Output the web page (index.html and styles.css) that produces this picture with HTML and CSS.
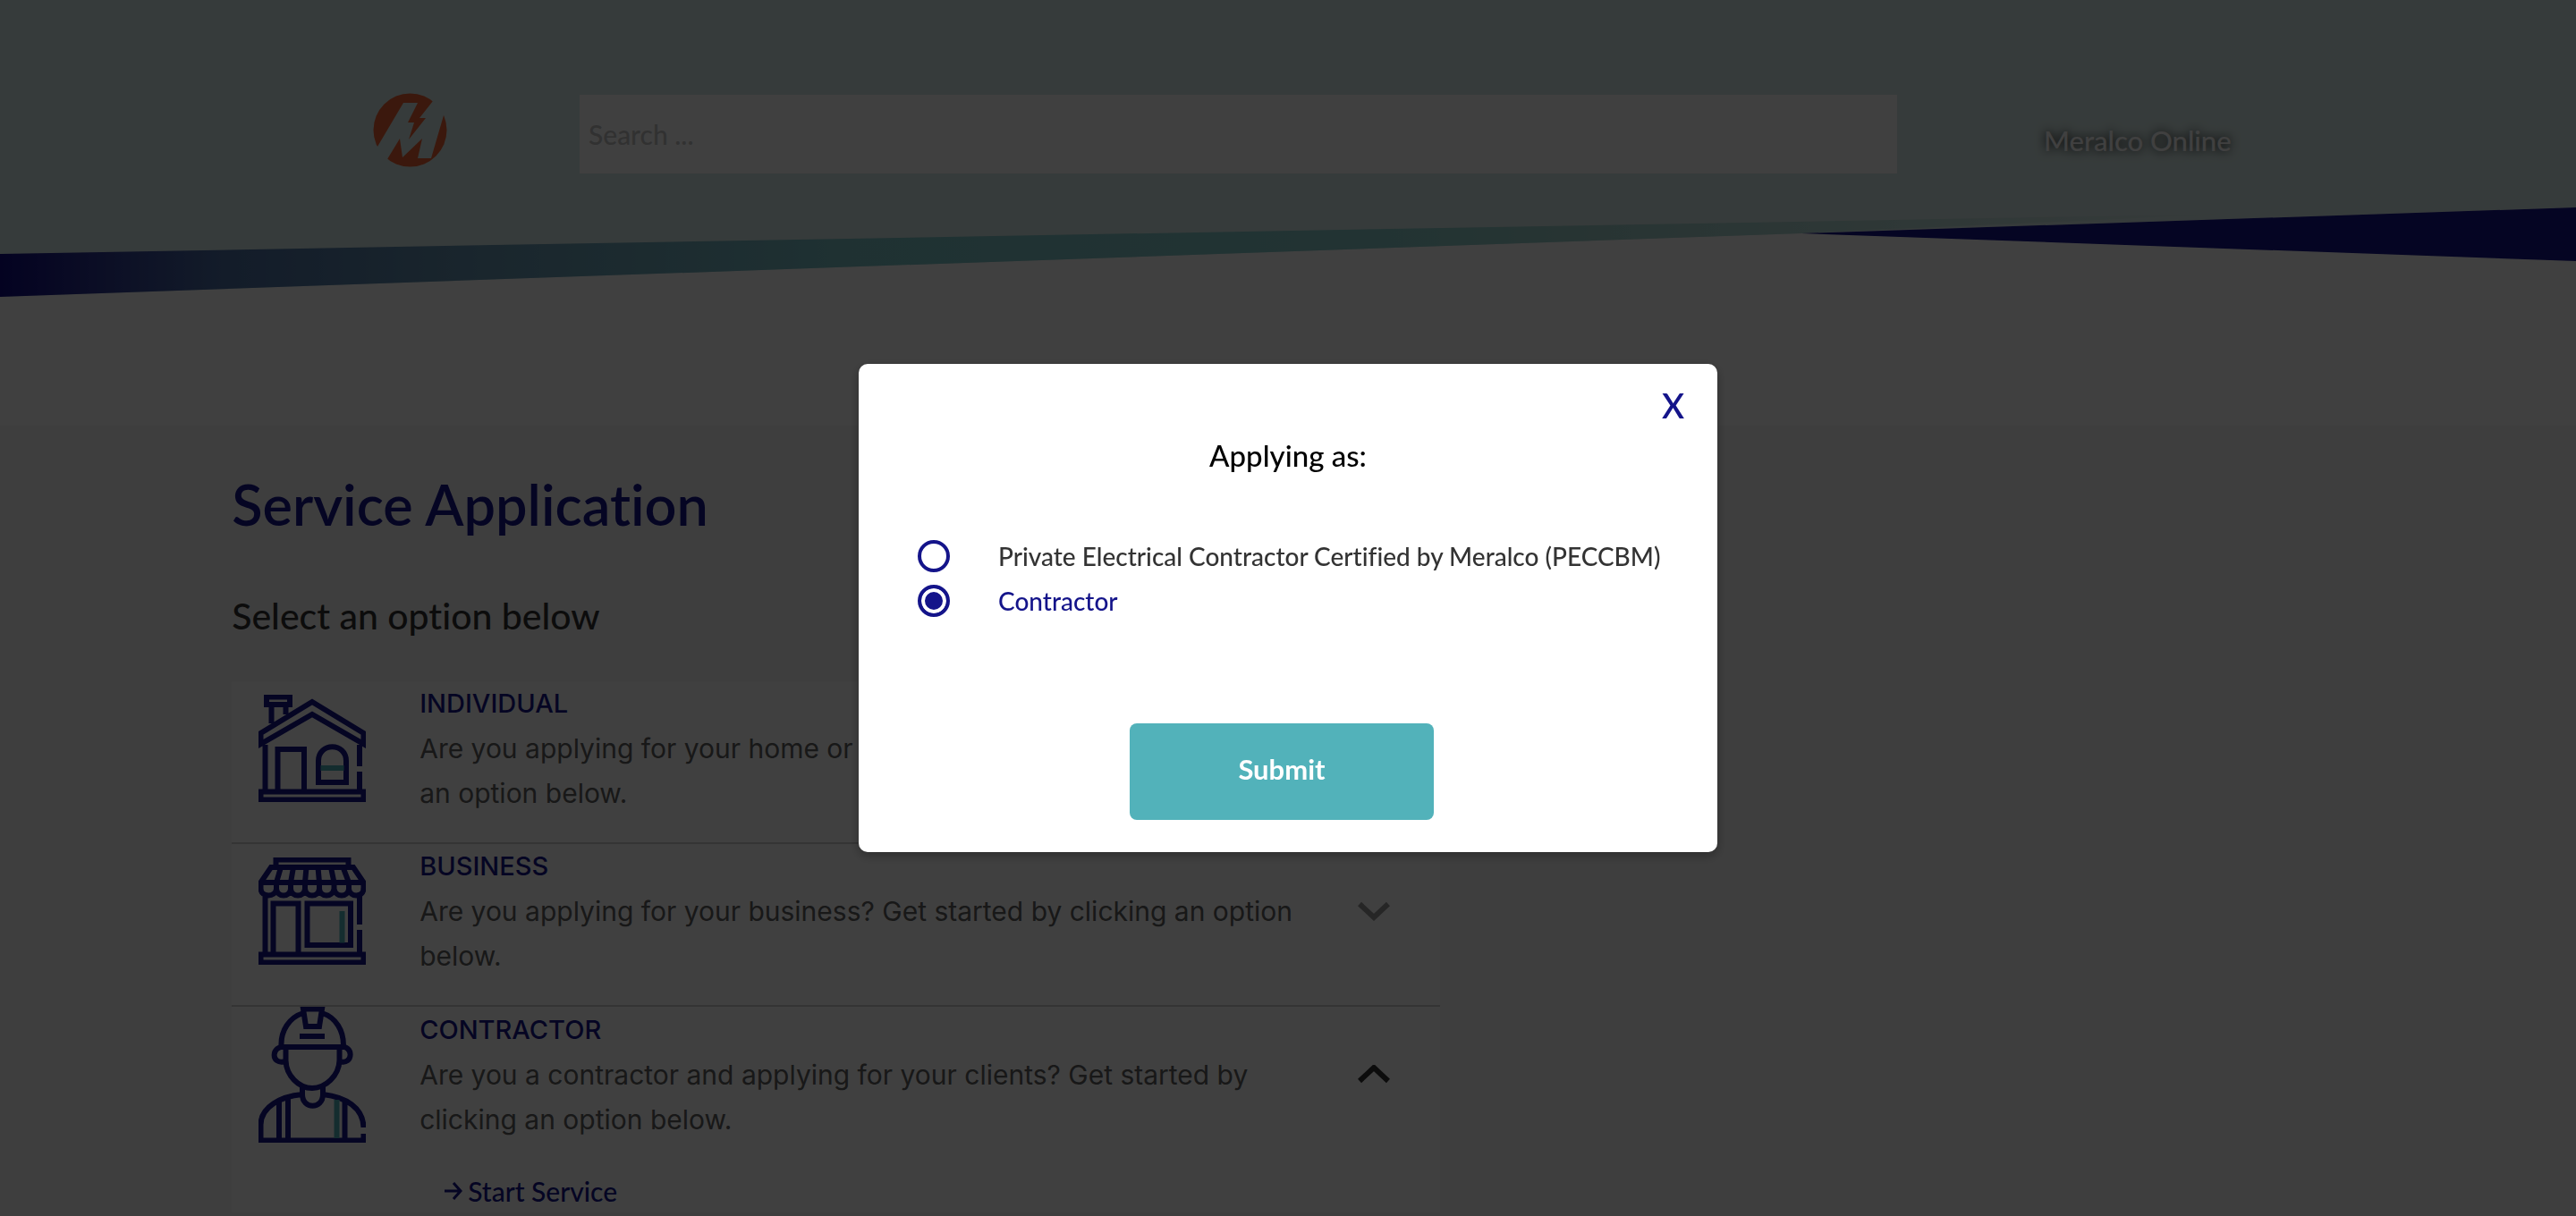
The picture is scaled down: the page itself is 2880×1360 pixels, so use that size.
FILE: index.html
```html
<!DOCTYPE html>
<html lang="en">
<head>
<meta charset="utf-8">
<meta name="viewport" content="width=device-width, initial-scale=1">
<title>Service Application | Meralco Online</title>
<link rel="stylesheet" href="styles.css">
</head>
<body>
<header class="site-header">
  <svg class="wave" viewBox="0 0 2880 476" preserveAspectRatio="none" aria-hidden="true">
    <defs>
      <linearGradient id="ribbon" x1="0" y1="0" x2="1" y2="0">
        <stop offset="0" stop-color="#100a84"/>
        <stop offset="0.04" stop-color="#2c3492"/>
        <stop offset="0.1" stop-color="#4c70a4"/>
        <stop offset="0.22" stop-color="#6898b4"/>
        <stop offset="0.38" stop-color="#7cc4c8"/>
        <stop offset="0.62" stop-color="#88cccc"/>
        <stop offset="0.72" stop-color="#a0d0cc"/>
        <stop offset="0.84" stop-color="#b8dcd8"/>
        <stop offset="1" stop-color="#d8ebe9"/>
      </linearGradient>
    </defs>
    <path fill="#d8ebe9" d="M0 0H2880V232L2014 261L0 332Z"/>
    <path fill="url(#ribbon)" d="M0 284L2500 239L2014 261L0 332Z"/>
    <path fill="#14148a" d="M2014 261L2880 232V292Z"/>
  </svg>
  <div class="header-row">
    <a class="brand" href="#" aria-label="Meralco">
      <svg class="logo" viewBox="0 0 83 83" aria-hidden="true">
        <mask id="bolt">
          <rect width="83" height="83" fill="#fff"/>
          <path fill="#000" d="M34 11H50L39 33H46L40 52L59 28H52L67 9L75 0H86L79 25L65 73H50L55 51L33 72L30 51L16 74L8 86L0 70L5 60Z"/>
        </mask>
        <circle cx="41.500" cy="41.500" r="41" fill="#ea6234" mask="url(#bolt)"/>
      </svg>
    </a>
    <input class="search" type="search" placeholder="Search ..." aria-label="Search">
    <a class="online-link" href="#">Meralco Online</a>
  </div>
</header>

<main class="content">
  <h1 class="page-title">Service Application</h1>
  <h2 class="page-subtitle">Select an option below</h2>
  <div class="options">
    <section class="option">
      <button class="option-head" type="button" aria-expanded="false">
        <svg class="option-icon" viewBox="0 0 120 120" aria-hidden="true">
          <path d="M9 2.500H35V11H9ZM14.500 12V32M30.500 12V22M60 8L117.500 43V55L60 22L2.500 55V43ZM7.500 56V107M113 56V80M113 86V107M21.500 107V61H51V107M67 98V74C67 53 98 53 98 74V98ZM2.500 108.500H117.500V117.500H2.500Z"/>
          <path class="accent" d="M69.500 82H95.500"/>
        </svg>
        <span class="option-text"><span class="option-name">INDIVIDUAL</span>Are you applying for your home or residence? Get started by clicking an option below.</span>
        <svg class="chevron" viewBox="0 0 36 22" aria-hidden="true"><path d="M2 3L18 18L34 3"/></svg>
      </button>
    </section>
    <section class="option">
      <button class="option-head" type="button" aria-expanded="false">
        <svg class="option-icon" viewBox="0 0 120 120" aria-hidden="true">
          <path d="M19.500 11V2.500H100.500V11M14 11H106L117.500 28H2.500ZM25 11L20 28M39 11L36 28M53.500 11L52 28M66.500 11L68 28M81 11L84.500 28M94.500 11L101 28M2.500 28V35C3 45 19 45 20 35V28M20 35C21 45 35 45 36 35V28M36 35C37 45 51 45 52 35V28M52 35C53 45 67 45 68 35V28M68 35C69 45 83 45 84.500 35V28M84.500 35C86 45 100 45 101 35V28M101 35C102 45 117 45 117.500 35V28M7.500 43V107M113 43V75M113 81V107M16.500 107V51.500H44.500V107M54.500 51.500H103V98H54.500ZM2.500 108.500H117.500V117.500H2.500Z"/>
          <path class="accent" d="M93.500 60V95.500"/>
        </svg>
        <span class="option-text"><span class="option-name">BUSINESS</span>Are you applying for your business? Get started by clicking an option below.</span>
        <svg class="chevron" viewBox="0 0 36 22" aria-hidden="true"><path d="M2 3L18 18L34 3"/></svg>
      </button>
    </section>
    <section class="option option-open">
      <button class="option-head" type="button" aria-expanded="true">
        <svg class="option-icon option-icon-tall" viewBox="0 0 120 152" aria-hidden="true">
          <path d="M50 2.500H71L68 22H53ZM25.500 43C25 27 34 12 50 7M95 43C95 27 87 12 71 7M25 45H95M30 45C14 42 13 66 30 61M91 45C107 42 106 66 91 61M30.500 45V60C31 77 45 91 60 91C75 91 90 77 90.500 60V45M49 89V98C49 115 72 115 72 98V89M49 98C25 100 2.500 112 2.500 132V149.500H117.500V142M72 98C98 101 117 113 117.500 135M23 105V149M33 102V149M96.500 104V149"/>
          <path d="M46 33H74"/>
          <path class="accent" d="M87.500 104V147"/>
        </svg>
        <span class="option-text"><span class="option-name">CONTRACTOR</span>Are you a contractor and applying for your clients? Get started by clicking an option below.</span>
        <svg class="chevron" viewBox="0 0 36 22" aria-hidden="true"><path d="M2 18L18 3L34 18"/></svg>
      </button>
      <div class="option-body">
        <a class="start-link" href="#">
          <svg class="arrow" viewBox="0 0 20 20" aria-hidden="true"><path d="M0 10H18M10 1L18 10L10 19"/></svg>
          Start Service
        </a>
      </div>
    </section>
  </div>
</main>

<div class="overlay">
  <form class="modal" role="dialog" aria-modal="true" aria-labelledby="modal-title">
    <button class="modal-close" type="button" aria-label="Close">X</button>
    <h2 class="modal-title" id="modal-title">Applying as:</h2>
    <div class="choices">
      <label class="choice"><input class="radio" type="radio" name="applicant" value="peccbm"><span class="choice-label">Private Electrical Contractor Certified by Meralco (PECCBM)</span></label>
      <label class="choice"><input class="radio" type="radio" name="applicant" value="contractor" checked><span class="choice-label">Contractor</span></label>
    </div>
    <div class="modal-actions"><button class="submit" type="submit">Submit</button></div>
  </form>
</div>
</body>
</html>
```
FILE: styles.css
```css
:root {
  --navy: #14148a;
  --teal: #52b2ba;
}

* { box-sizing: border-box; }

body {
  margin: 0;
  background: #f7f7f7;
  color: #333;
  font-family: Lato, "Open Sans", sans-serif;
  font-weight: 500;
  font-variant-ligatures: none;
}

button, input { font: inherit; }
a { text-decoration: none; }
h1, h2 { margin: 0; font-weight: 600; }

/* Header */
.site-header {
  position: relative;
  height: 476px;
  padding-top: 104px;
  background: #fff;
}
.wave {
  position: absolute;
  inset: 0;
  width: 100%;
  height: 100%;
}
.header-row {
  position: relative;
  display: grid;
  grid-template-columns: 22.5% 51.15% 1fr;
  align-items: center;
}
.brand { padding: 0 0 8px 64.4%; }
.logo { display: block; width: 83px; height: 83px; }
.search {
  height: 88px;
  padding: 0 10px;
  border: 0;
  border-radius: 0;
  background: #fff;
  font-size: 30px;
  appearance: none;
}
.search::placeholder { color: #c4c4c4; opacity: 1; }
.online-link {
  padding: 14px 0 0 164px;
  color: #fff;
  font-size: 31px;
  text-shadow: 0 0 12px #000;
}

/* Page content */
.content { padding: 48px 9% 0; }
.page-title {
  color: var(--navy);
  font-size: 63px;
  line-height: 80px;
}
.page-subtitle {
  margin: 60px 0 48px;
  font-size: 41px;
  font-weight: 500;
  line-height: 50px;
}

/* Options list */
.options { width: 57.2%; background: #fff; }
.option + .option { border-top: 2px solid #d0d0d0; }
.option-head {
  display: grid;
  grid-template-columns: 120px 1fr 36px;
  column-gap: 60px;
  align-items: center;
  width: 100%;
  padding: 0 56px 30px 30px;
  border: 0;
  background: none;
  color: #606060;
  font-family: Inter, sans-serif;
  font-size: 30px;
  font-weight: 400;
  line-height: 50px;
  text-align: left;
}
.option-name {
  display: block;
  color: var(--navy);
  font-size: 29px;
  font-weight: 500;
}
.option-icon {
  display: block;
  width: 120px;
  height: 120px;
  fill: none;
  stroke: var(--navy);
  stroke-width: 6;
}
.option-icon-tall { height: 152px; }
.option-icon .accent { stroke: var(--teal); }
.chevron {
  width: 36px;
  height: 22px;
  fill: none;
  stroke: #999;
  stroke-width: 6;
}
.option-open .chevron { stroke: #333; }
.option-body { padding-left: 238px; }
.start-link {
  display: flex;
  align-items: center;
  gap: 6px;
  color: var(--navy);
  font-size: 30px;
  line-height: 48px;
}
.arrow {
  width: 20px;
  height: 20px;
  fill: none;
  stroke: currentColor;
  stroke-width: 3;
}

/* Dialog */
.overlay {
  position: fixed;
  inset: 0;
  display: flex;
  align-items: center;
  justify-content: center;
  background: rgba(0, 0, 0, .75);
}
.modal {
  display: flex;
  flex-direction: column;
  width: 33.333%;
  padding: 26px 37px 36px 66px;
  border-radius: 10px;
  background: #fff;
  box-shadow: 0 4px 12px rgba(0, 0, 0, .3);
}
.modal-close {
  align-self: flex-end;
  padding: 0;
  border: 0;
  background: none;
  color: var(--navy);
  font-size: 38px;
  font-weight: 600;
  line-height: 40px;
}
.modal-title {
  margin: 16px 29px 68px 0;
  color: #000;
  font-size: 33px;
  font-weight: 500;
  line-height: 40px;
  text-align: center;
}
.choice {
  display: flex;
  align-items: center;
  gap: 54px;
  font-size: 28px;
  line-height: 50px;
}
.radio {
  flex: none;
  width: 36px;
  height: 36px;
  margin: 0;
  border: 4px solid var(--navy);
  border-radius: 50%;
  appearance: none;
}
.radio:checked {
  background: var(--navy);
  box-shadow: inset 0 0 0 4px #fff;
}
.radio:checked + .choice-label { color: var(--navy); }
.choice-label { white-space: nowrap; }
.modal-actions {
  display: flex;
  justify-content: center;
  margin: 112px 43px 0 0;
}
.submit {
  width: 340px;
  height: 108px;
  padding: 0 0 6px;
  border: 0;
  border-radius: 8px;
  background: var(--teal);
  color: #fff;
  font-size: 31px;
  font-weight: 700;
}
```
